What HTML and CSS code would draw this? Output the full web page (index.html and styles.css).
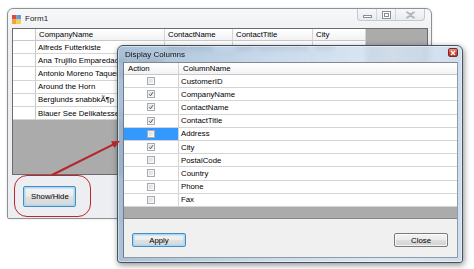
FILE: index.html
```html
<!DOCTYPE html>
<html>
<head>
<meta charset="utf-8">
<link rel="stylesheet" href="styles.css">
</head>
<body>
<div class="desktop">
  <div class="form1">
    <div class="titlebar">
      <svg class="app-icon" width="9" height="9" viewBox="0 0 9 9">
        <rect x="0" y="0" width="4.5" height="4.5" fill="#e2483c"/>
        <rect x="4.5" y="0" width="4.5" height="4.5" fill="#5d9be0"/>
        <rect x="0" y="4.5" width="4.5" height="4.5" fill="#f2a531"/>
        <rect x="4.5" y="4.5" width="4.5" height="4.5" fill="#f6d04a"/>
      </svg>
      <span class="title">Form1</span>
      <div class="caption">
        <span class="cbtn cmin"><svg width="9" height="7" viewBox="0 0 9 7"><rect x="0.5" y="4.5" width="8" height="2" fill="#fff" stroke="#8a8d91"/></svg></span>
        <span class="cbtn cmax"><svg width="9" height="8" viewBox="0 0 9 8"><rect x="0.5" y="0.5" width="8" height="7" fill="#fff" stroke="#8a8d91"/><rect x="2.5" y="2.5" width="4" height="3" fill="none" stroke="#8a8d91"/></svg></span>
        <span class="cbtn cclose"><svg width="11" height="8" viewBox="0 0 11 8"><path d="M1.5 0.8 L5.5 3.6 L9.5 0.8 M1.5 7.2 L5.5 4.4 L9.5 7.2" fill="none" stroke="#8a8d91" stroke-width="1.6"/><path d="M1.5 0.8 L5.5 3.6 L9.5 0.8 M1.5 7.2 L5.5 4.4 L9.5 7.2" fill="none" stroke="#fff" stroke-width="0.5"/></svg></span>
      </div>
    </div>
    <div class="gridview">
      <div class="g1">
        <div class="c h rh"></div>
        <div class="c h">CompanyName</div>
        <div class="c h">ContactName</div>
        <div class="c h">ContactTitle</div>
        <div class="c h">City</div>

        <div class="c rh"></div><div class="c">Alfreds Futterkiste</div><div class="c">Maria Anders</div><div class="c">Sales Representative</div><div class="c">Berlin</div>
        <div class="c rh"></div><div class="c">Ana Trujillo Emparedados y helados</div><div class="c"></div><div class="c"></div><div class="c"></div>
        <div class="c rh"></div><div class="c">Antonio Moreno Taquería</div><div class="c"></div><div class="c"></div><div class="c"></div>
        <div class="c rh"></div><div class="c">Around the Horn</div><div class="c"></div><div class="c"></div><div class="c"></div>
        <div class="c rh"></div><div class="c">Berglunds snabbkÃ¶p</div><div class="c"></div><div class="c"></div><div class="c"></div>
        <div class="c rh"></div><div class="c">Blauer See Delikatessen</div><div class="c"></div><div class="c"></div><div class="c"></div>
      </div>
    </div>
    <div class="form-bottom">
      <div class="highlight">
        <button class="btn focus big">Show/Hide</button>
      </div>
    </div>
  </div>

  <div class="dialog">
    <div class="dtitle">
      <span class="title">Display Columns</span>
      <span class="dclose"><svg width="6" height="6" viewBox="0 0 6 6"><path d="M1 1 L5 5 M5 1 L1 5" stroke="#fff" stroke-width="1.4"/></svg></span>
    </div>
    <div class="dclient">
      <div class="dgrid">
        <div class="drow dhead"><div class="ca">Action</div><div class="cn">ColumnName</div></div>
        <div class="drow"><div class="ca"><span class="chk"></span></div><div class="cn">CustomerID</div></div>
        <div class="drow"><div class="ca"><span class="chk on"><svg viewBox="0 0 6 6"><path d="M1 3.2 L2.5 4.8 L5 1.2" fill="none" stroke="#4f5e6e" stroke-width="1"/></svg></span></div><div class="cn">CompanyName</div></div>
        <div class="drow"><div class="ca"><span class="chk on"><svg viewBox="0 0 6 6"><path d="M1 3.2 L2.5 4.8 L5 1.2" fill="none" stroke="#4f5e6e" stroke-width="1"/></svg></span></div><div class="cn">ContactName</div></div>
        <div class="drow"><div class="ca"><span class="chk on"><svg viewBox="0 0 6 6"><path d="M1 3.2 L2.5 4.8 L5 1.2" fill="none" stroke="#4f5e6e" stroke-width="1"/></svg></span></div><div class="cn">ContactTitle</div></div>
        <div class="drow"><div class="ca sel"><span class="chk"></span></div><div class="cn">Address</div></div>
        <div class="drow"><div class="ca"><span class="chk on"><svg viewBox="0 0 6 6"><path d="M1 3.2 L2.5 4.8 L5 1.2" fill="none" stroke="#4f5e6e" stroke-width="1"/></svg></span></div><div class="cn">City</div></div>
        <div class="drow"><div class="ca"><span class="chk"></span></div><div class="cn">PostalCode</div></div>
        <div class="drow"><div class="ca"><span class="chk"></span></div><div class="cn">Country</div></div>
        <div class="drow"><div class="ca"><span class="chk"></span></div><div class="cn">Phone</div></div>
        <div class="drow"><div class="ca"><span class="chk"></span></div><div class="cn">Fax</div></div>
      </div>
      <div class="dbottom">
        <button class="btn focus">Apply</button>
        <button class="btn">Close</button>
      </div>
    </div>
  </div>

  <svg class="arrow" width="474" height="269" viewBox="0 0 474 269">
    <line x1="52" y1="175" x2="113.5" y2="144.3" stroke="#b3262b" stroke-width="2"/>
    <polygon points="120,141 114.4,148 111,141.2" fill="#b3262b"/>
  </svg>
</div>
</body>
</html>
```
FILE: styles.css
```css
* { box-sizing: border-box; }
html, body { margin: 0; padding: 0; background: #fff; }
body {
  font-family: "Liberation Sans", Arial, sans-serif;
  font-size: 7.8px;
  color: #000;
}
.desktop {
  position: relative;
  width: 474px;
  height: 269px;
  overflow: hidden;
  background: #fff;
}

/* ---------- Form1 ---------- */
.form1 {
  position: absolute;
  left: 7px;
  top: 8px;
  width: 425px;
  height: 211px;
  border: 1px solid #8e9094;
  border-radius: 6px 6px 2px 2px;
  background: linear-gradient(#f7f8fa, #eceef1 30px);
  padding: 0 3px 3px 4px;
  display: flex;
  flex-direction: column;
  box-shadow: 0 0 3px rgba(0,0,0,0.12);
}
.form1 .titlebar {
  height: 19px;
  flex: none;
  display: flex;
  align-items: center;
}
.app-icon { flex: none; margin-right: 4px; margin-top: 1px; }
.title {
  font-size: 8px;
  color: #1b1b1b;
}
.caption {
  margin-left: auto;
  margin-right: 3px;
  align-self: flex-start;
  display: flex;
  height: 12px;
  border: 1px solid #c4c7cb;
  border-top: none;
  border-radius: 0 0 4px 4px;
  background: linear-gradient(#f6f7f9, #e9ecef);
}
.cbtn {
  display: flex;
  align-items: center;
  justify-content: center;
  height: 100%;
  border-right: 1px solid #d3d6da;
}
.cmin { width: 19px; }
.cmax { width: 19px; }
.cclose { width: 28px; border-right: none; }

.gridview {
  flex: none;
  height: 147px;
  border: 1px solid #6b6b6b;
  background: #ababab;
  overflow: hidden;
}
.g1 {
  display: grid;
  grid-template-columns: 23px 129px 68px 80px 53px;
  grid-template-rows: 12px;
  grid-auto-rows: 13.2px;
  width: max-content;
}
.c {
  background: #fff;
  border-right: 1px solid #d4d4d4;
  border-bottom: 1px solid #d4d4d4;
  white-space: nowrap;
  overflow: hidden;
  padding-left: 2px;
  display: flex;
  align-items: center;
}
.c.h {
  background: linear-gradient(#ffffff, #f1f2f4);
  border-bottom-color: #c8c8c8;
  padding-left: 3px;
}
.c.rh { background: #fff; border-right-color: #c8c8c8; }

.form-bottom {
  flex: 1;
  display: flex;
  align-items: flex-start;
}
.highlight {
  margin-left: 2px;
  width: 77px;
  height: 42px;
  border: 1.6px solid #b8282e;
  border-radius: 13px;
  display: flex;
  align-items: center;
  padding-left: 8.4px;
  padding-top: 1px;
}

/* ---------- Buttons ---------- */
.btn {
  width: 54px;
  height: 14px;
  padding: 0;
  font-family: "Liberation Sans", Arial, sans-serif;
  font-size: 7.8px;
  color: #000;
  border: 1px solid #7a7a7a;
  border-radius: 2px;
  background: linear-gradient(#f3f3f3 0%, #ebebeb 48%, #dedede 52%, #d2d2d2 100%);
  box-shadow: inset 0 0 0 1px rgba(255,255,255,0.75);
}
.btn.focus {
  border-color: #4a8cbf;
  background: linear-gradient(#f5f5f5 0%, #ececec 48%, #e0e0e0 52%, #d8d8d8 100%);
  box-shadow: inset 0 0 0 1.5px #a9d8f4;
}
.btn.big { width: 53px; height: 21px; }

/* ---------- Dialog ---------- */
.dialog {
  position: absolute;
  left: 117px;
  top: 45px;
  width: 346px;
  height: 218px;
  border: 1px solid #45525f;
  border-radius: 6px 6px 3px 3px;
  background: linear-gradient(to right, rgba(150,178,205,0.82), rgba(190,211,232,0.82) 45%, rgba(214,228,242,0.85) 80%, rgba(198,216,234,0.85));
  -webkit-backdrop-filter: blur(2px);
  backdrop-filter: blur(2px);
  padding: 0 4px 4px 5px;
  display: flex;
  flex-direction: column;
  box-shadow: 1px 2px 6px rgba(0,0,0,0.45), inset 0 0 0 1px rgba(255,255,255,0.45);
  z-index: 2;
}
.dtitle {
  height: 16px;
  flex: none;
  display: flex;
  align-items: center;
  padding-left: 2px;
  position: relative;
}
.dtitle .title { font-size: 8px; color: #111; }
.dclose {
  position: absolute;
  right: 0;
  top: 2px;
  width: 10px;
  height: 9px;
  border: 1px solid #7b2b25;
  border-radius: 2px;
  background: linear-gradient(#e3958d, #cc4b3e 50%, #b93225);
  display: flex;
  align-items: center;
  justify-content: center;
}
.dclient {
  flex: 1;
  background: #f0f0f0;
  display: flex;
  flex-direction: column;
  border: 1px solid #8e9aa6;
  border-top: none;
  border-left-color: #6e7b88;
}
.dgrid {
  flex: none;
  height: 157px;
  background: #ababab;
  border: 1px solid #828790;
  border-left: none;
  border-right: none;
  overflow: hidden;
}
.drow {
  display: flex;
  height: 13.2px;
  background: #fff;
  border-bottom: 1px solid #d4d4d4;
}
.drow.dhead {
  height: 12px;
  background: linear-gradient(#ffffff, #f2f3f5);
  border-bottom-color: #c8c8c8;
}
.ca {
  width: 55px;
  flex: none;
  border-right: 1px solid #d4d4d4;
  display: flex;
  align-items: center;
  justify-content: center;
}
.dhead .ca { justify-content: flex-start; padding-left: 4px; }
.ca.sel { background: #3399ff; }
.cn {
  flex: 1;
  display: flex;
  align-items: center;
  padding-left: 2px;
  white-space: nowrap;
}
.dhead .cn { padding-left: 4px; }
.chk {
  width: 8px;
  height: 8px;
  border: 1px solid #a7abb0;
  background: linear-gradient(135deg, #d6d8db, #f3f4f5);
  box-shadow: inset 0 0 0 1px rgba(255,255,255,0.6);
  display: flex;
  align-items: center;
  justify-content: center;
}
.chk svg { width: 6px; height: 6px; }
.dbottom {
  flex: 1;
  display: flex;
  justify-content: space-between;
  align-items: flex-start;
  padding: 14px 9px 0 8px;
}

/* ---------- Annotation arrow ---------- */
.arrow {
  position: absolute;
  left: 0;
  top: 0;
  z-index: 3;
  pointer-events: none;
}
```
